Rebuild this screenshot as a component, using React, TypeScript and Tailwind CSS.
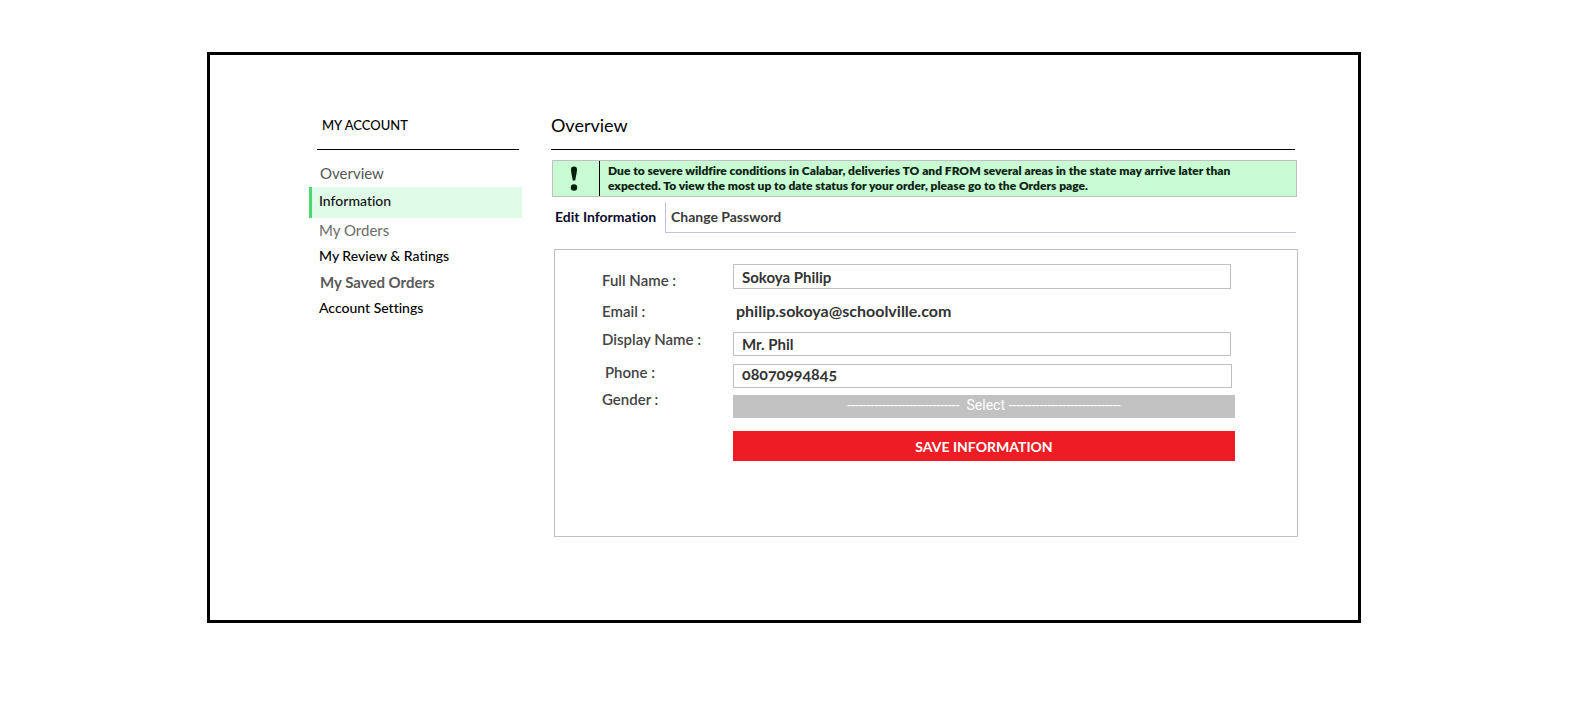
import type { ReactNode } from "react";

const navItems = [
  { label: "Overview", look: "pl-[8px] text-[15px] text-[#555]" },
  { label: "Information", look: "", active: true },
  { label: "My Orders", look: "pl-[7px] text-[15px] text-[#6b6b6b]" },
  { label: "My Review & Ratings", look: "pl-[7px] text-[14px] font-medium text-black" },
  { label: "My Saved Orders", look: "pl-[8px] text-[15px] font-bold text-[#5a5a5a]" },
  { label: "Account Settings", look: "pl-[7px] text-[14px] font-medium text-black" },
];

const dashes = "-----------------------------";

const fieldBox = "block w-full border border-[#c0c0c0] bg-white px-[8px] font-bold text-[#333] outline-none";

interface FieldProps {
  id: string;
  label: string;
  className: string;
  labelClass?: string;
  children: ReactNode;
}

function Field({ id, label, className, labelClass = "", children }: FieldProps) {
  return (
    <div className={`grid grid-cols-[131px_1fr] items-start ${className}`}>
      <label htmlFor={id} className={`text-[15px] leading-[20px] font-semibold text-[#444] ${labelClass}`}>
        {label}
      </label>
      {children}
    </div>
  );
}

function Sidebar() {
  return (
    <aside className="w-[213px] shrink-0">
      <h2 className="mr-[3px] ml-[8px] border-b border-black pb-[12px] pl-[5px] text-[13px] leading-[24px] font-medium text-black">
        MY ACCOUNT
      </h2>
      <nav className="flex flex-col pt-[11px]">
        {navItems.map((item) =>
          item.active ? (
            <a
              key={item.label}
              href="#information"
              aria-current="page"
              className="block h-[31px] border-l-[3px] border-[#4cd774] bg-[#e0fce9] pl-[7px] text-[14px] leading-[28px] font-medium text-[#111]"
            >
              {item.label}
            </a>
          ) : (
            <a key={item.label} href="#account" className={`mb-[2px] ml-[3px] block leading-[24px] ${item.look}`}>
              {item.label}
            </a>
          ),
        )}
      </nav>
    </aside>
  );
}

function Notice() {
  return (
    <div role="alert" className="mx-[1px] mt-[10px] flex border border-[#c0c0c0] bg-[#c8fad4] text-[#0b240f]">
      <div className="flex w-[47px] shrink-0 items-center justify-center border-r border-black">
        <svg width="8" height="26" viewBox="0 0 8 26" aria-hidden="true" className="mr-[5px] fill-[#032108]">
          <path d="M4 .5C6 .5 7.2 1.5 7 4C6.8 7 5.8 11 5.2 14.4H2.8C2.2 11 1.2 7 1 4C.8 1.5 2 .5 4 .5Z" />
          <ellipse cx="4" cy="21.5" rx="3.2" ry="3.2" />
        </svg>
      </div>
      <p className="pt-[2px] pr-[48px] pb-[3px] pl-[8px] text-[12px] leading-[15px] font-extrabold">
        Due to severe wildfire conditions in Calabar, deliveries TO and FROM several areas in the state may arrive later
        than expected. To view the most up to date status for your order, please go to the Orders page.
      </p>
    </div>
  );
}

export default function App() {
  return (
    <div className="min-h-screen bg-white pt-[52px] pr-[233px] pb-[86px] pl-[207px] font-['Lato','Open_Sans',sans-serif] [font-variant-ligatures:none]">
      <div className="flex gap-[29px] border-[3px] border-black pt-[58px] pr-[60px] pb-[83px] pl-[99px]">
        <Sidebar />
        <main className="min-w-0 flex-1">
          <h1 className="mr-[3px] border-b border-black pb-[12px] text-[18px] leading-[24px] text-black">Overview</h1>
          <Notice />
          <div role="tablist" className="mt-[5px] mr-[2px] flex h-[31px]">
            <button
              role="tab"
              aria-selected="true"
              type="button"
              className="w-[114px] shrink-0 pb-[2px] pl-[4px] text-left text-[14px] font-bold text-[#0a0a2e]"
            >
              Edit Information
            </button>
            <button
              role="tab"
              aria-selected="false"
              type="button"
              className="flex-1 border-b border-l border-[#c3bde6] pb-[1px] pl-[5px] text-left text-[14px] font-bold text-[#3a3a3a]"
            >
              Change Password
            </button>
          </div>
          <form className="mt-[16px] ml-[3px] flex flex-col border border-[#c0c0c0] pt-[14px] pr-[62px] pb-[75px] pl-[47px]">
            <Field id="full-name" label="Full Name :" className="pr-[4px]" labelClass="pt-[6px]">
              <input id="full-name" defaultValue="Sokoya Philip" className={`${fieldBox} h-[25px] text-[15px]`} />
            </Field>
            <Field id="email" label="Email :" className="mt-[11px]">
              <output id="email" className="pl-[3px] text-[16px] leading-[20px] font-bold text-[#333]">
                philip.sokoya@schoolville.com
              </output>
            </Field>
            <Field id="display-name" label="Display Name :" className="mt-[8px] pr-[4px]">
              <input id="display-name" defaultValue="Mr. Phil" className={`${fieldBox} mt-[3px] h-[24px] text-[15px]`} />
            </Field>
            <Field id="phone" label="Phone :" className="mt-[6px] pr-[3px]" labelClass="pl-[3px]">
              <input
                id="phone"
                type="tel"
                defaultValue="08070994845"
                className={`${fieldBox} mt-[2px] h-[24px] pb-[4px] text-[16px] oldstyle-nums`}
              />
            </Field>
            <Field id="gender" label="Gender :" className="mt-[1px]">
              <select
                id="gender"
                className="mt-[6px] block h-[23px] w-full appearance-none bg-[#c2c2c2] pb-[6px] text-center font-['Roboto',sans-serif] text-[14px] text-white outline-none"
              >
                <option>{`${dashes}\u00a0 Select ${dashes}`}</option>
                <option>Female</option>
                <option>Male</option>
              </select>
            </Field>
            <button type="submit" className="mt-[13px] ml-[131px] h-[30px] bg-[#ee1c24] text-[14px] font-bold text-white">
              SAVE INFORMATION
            </button>
          </form>
        </main>
      </div>
    </div>
  );
}
